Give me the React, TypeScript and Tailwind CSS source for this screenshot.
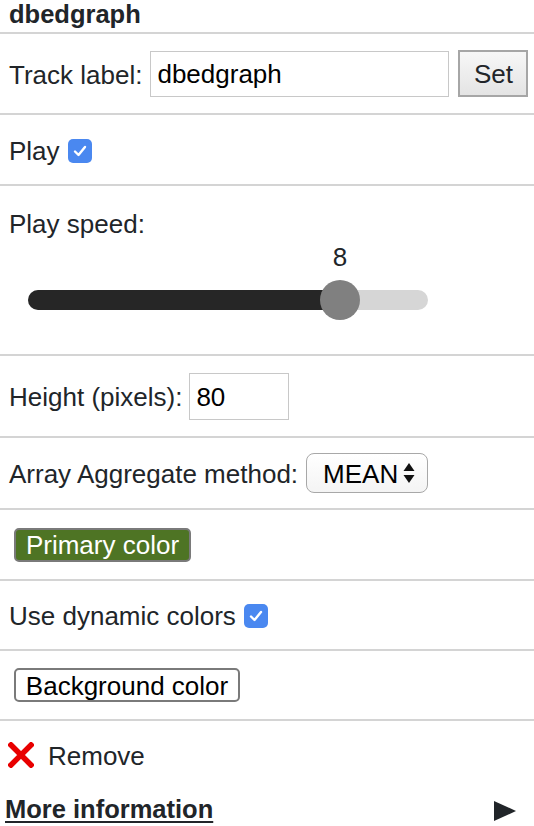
import React from "react";

function Check() {
  return (
    <span className="inline-flex h-[24px] w-[24px] items-center justify-center rounded-[5px] bg-[#4a88f0]">
      <svg width="16" height="16" viewBox="0 0 16 16">
        <path d="M3 8.5 L6.5 12 L13 4" fill="none" stroke="#ffffff" strokeWidth="2.4" strokeLinecap="round" strokeLinejoin="round" />
      </svg>
    </span>
  );
}

export default function App() {
  const font = { fontFamily: '"Liberation Sans", Arial, Helvetica, sans-serif' };
  return (
    <div className="w-[534px] h-[826px] bg-white text-[#212529] text-[26px] overflow-hidden" style={font}>
      <div className="h-[34px] border-b-2 border-[#d4d4d4] pl-[9px] font-bold text-[25.5px] leading-[28px]">dbedgraph</div>

      <div className="h-[81px] border-b-2 border-[#d4d4d4] flex items-center pl-[9px]">
        <span className="leading-[28px] pt-[2px]">Track label:</span>
        <input
          readOnly
          value="dbedgraph"
          className="ml-[8px] w-[299px] h-[46px] border border-[#c8c8c8] pl-[6px] pt-[2px] text-black text-[26px] outline-none"
          style={font}
        />
        <button
          className="ml-[9px] w-[70px] h-[47px] border-2 border-[#a6a6a6] bg-gradient-to-b from-[#f7f7f7] to-[#e4e4e4] text-[#212529] text-[26px] pt-[2px]"
          style={font}
        >
          Set
        </button>
      </div>

      <div className="h-[71px] border-b-2 border-[#d4d4d4] flex items-center pl-[9px] pt-[2px] gap-[8px]">
        <span className="leading-[28px]">Play</span>
        <Check />
      </div>

      <div className="h-[170px] border-b-2 border-[#d4d4d4] flex flex-col pt-[24px] pl-[9px]">
        <span className="leading-[28px]">Play speed:</span>
        <div className="relative ml-[19px] mt-[5px] w-[400px] h-[77px]">
          <div className="absolute left-[292px] top-0 w-[40px] text-center leading-[28px]">8</div>
          <div className="absolute left-0 top-[47px] h-[20px] w-[400px] rounded-full bg-[#d6d6d6]">
            <div className="h-[20px] w-[312px] rounded-full bg-[#262626]" />
          </div>
          <div className="absolute left-[292px] top-[37px] h-[40px] w-[40px] rounded-full bg-[#808080]" />
        </div>
      </div>

      <div className="h-[82px] border-b-2 border-[#d4d4d4] flex items-center pl-[9px]">
        <span className="leading-[28px] pt-[2px]">Height (pixels):</span>
        <input
          readOnly
          value="80"
          className="ml-[7px] w-[100px] h-[47px] border border-[#c8c8c8] pl-[6px] pt-[2px] text-black text-[26px] outline-none"
          style={font}
        />
      </div>

      <div className="h-[72px] border-b-2 border-[#d4d4d4] flex items-center pl-[9px]">
        <span className="leading-[28px] pt-[2px]">Array Aggregate method:</span>
        <div className="ml-[8px] w-[122px] h-[40px] rounded-[8px] border-[1.5px] border-[#a8a8a8] bg-gradient-to-b from-[#ffffff] to-[#f4f4f4] flex items-center pl-[16px] gap-[5px] text-black">
          <span className="leading-[28px] pt-[2px]">MEAN</span>
          <svg width="12" height="22" viewBox="0 0 12 22">
            <polygon points="6,1 11.5,9 0.5,9" fill="#111" />
            <polygon points="0.5,13 11.5,13 6,21" fill="#111" />
          </svg>
        </div>
      </div>

      <div className="h-[71px] border-b-2 border-[#d4d4d4] flex items-center pl-[14px]">
        <button
          className="h-[34px] w-[177px] rounded-[5px] border-2 border-[#7a7a7a] bg-[#4e7424] text-white text-[26px] leading-[28px] pt-[1px]"
          style={font}
        >
          Primary color
        </button>
      </div>

      <div className="h-[70px] border-b-2 border-[#d4d4d4] flex items-center pl-[9px] pt-[2px] gap-[8px]">
        <span className="leading-[28px]">Use dynamic colors</span>
        <Check />
      </div>

      <div className="h-[70px] border-b-2 border-[#d4d4d4] flex items-center pl-[14px]">
        <button
          className="h-[34px] w-[226px] rounded-[5px] border-2 border-[#7a7a7a] bg-white text-black text-[26px] leading-[28px] pt-[1px]"
          style={font}
        >
          Background color
        </button>
      </div>

      <div className="h-[66px] flex items-center pl-[8px] pt-[1px]">
        <svg width="26" height="26" viewBox="0 0 26 26">
          <path d="M3 3 L23 23 M23 3 L3 23" stroke="#e80000" strokeWidth="5.5" strokeLinecap="square" />
        </svg>
        <span className="ml-[14px] leading-[28px] pt-[2px]">Remove</span>
      </div>

      <div className="flex items-start justify-between pl-[5px] pr-[18px]">
        <span className="font-bold text-[25.5px] underline underline-offset-[3px] leading-[28px] pt-[8px]">More information</span>
        <svg className="mt-[14px]" width="22" height="20" viewBox="0 0 22 20">
          <polygon points="0,0 22,10 0,20" fill="#212529" />
        </svg>
      </div>
    </div>
  );
}
